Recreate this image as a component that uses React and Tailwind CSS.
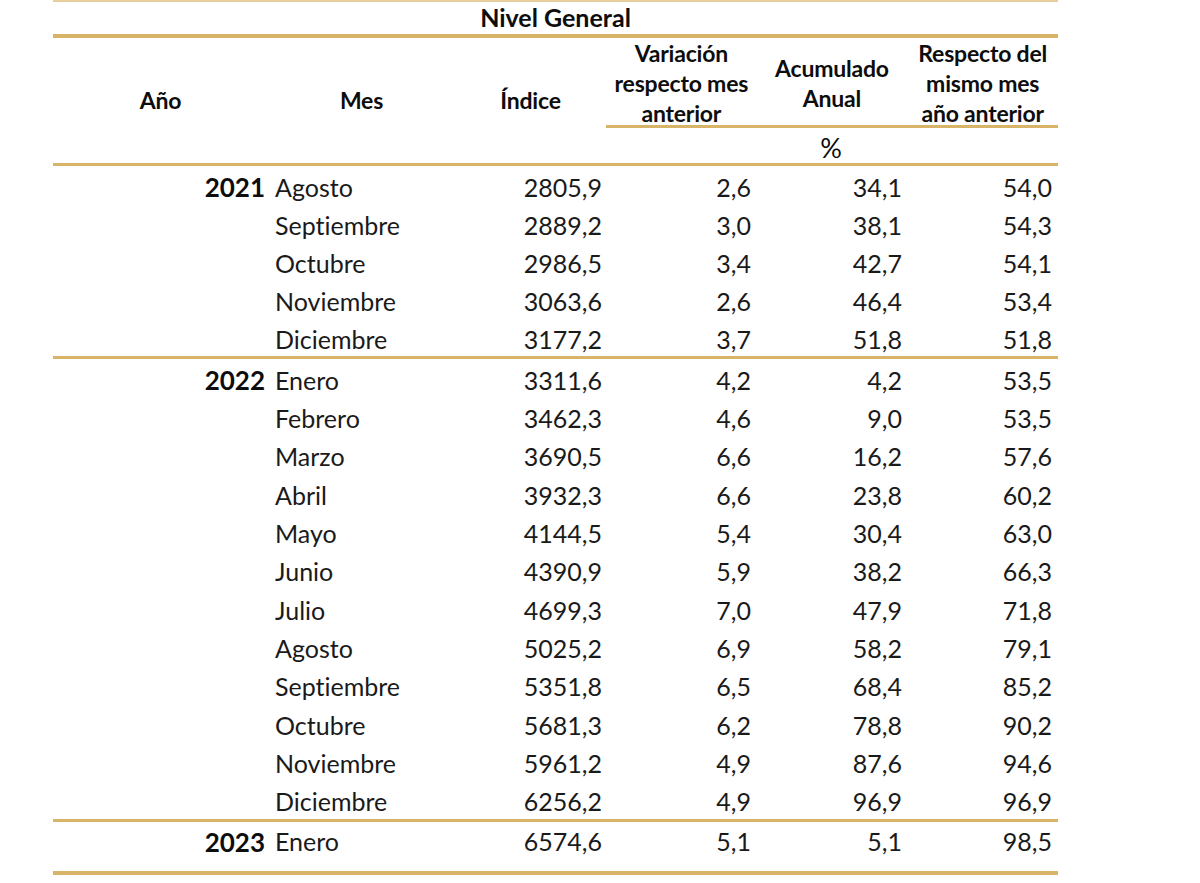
const rows2021 = [
  ["Agosto", "2805,9", "2,6", "34,1", "54,0"],
  ["Septiembre", "2889,2", "3,0", "38,1", "54,3"],
  ["Octubre", "2986,5", "3,4", "42,7", "54,1"],
  ["Noviembre", "3063,6", "2,6", "46,4", "53,4"],
  ["Diciembre", "3177,2", "3,7", "51,8", "51,8"],
];

const rows2022 = [
  ["Enero", "3311,6", "4,2", "4,2", "53,5"],
  ["Febrero", "3462,3", "4,6", "9,0", "53,5"],
  ["Marzo", "3690,5", "6,6", "16,2", "57,6"],
  ["Abril", "3932,3", "6,6", "23,8", "60,2"],
  ["Mayo", "4144,5", "5,4", "30,4", "63,0"],
  ["Junio", "4390,9", "5,9", "38,2", "66,3"],
  ["Julio", "4699,3", "7,0", "47,9", "71,8"],
  ["Agosto", "5025,2", "6,9", "58,2", "79,1"],
  ["Septiembre", "5351,8", "6,5", "68,4", "85,2"],
  ["Octubre", "5681,3", "6,2", "78,8", "90,2"],
  ["Noviembre", "5961,2", "4,9", "87,6", "94,6"],
  ["Diciembre", "6256,2", "4,9", "96,9", "96,9"],
];

const rows2023 = [["Enero", "6574,6", "5,1", "5,1", "98,5"]];

const cols = "grid grid-cols-[215px_187px_151px_150px_150px_152px]";

function Rule() {
  return <div className="h-[3px] bg-[#d7b468]" />;
}

function Group({ year, rows, h }) {
  return (
    <div>
      {rows.map((r, i) => (
        <div key={i} className={`${cols} ${h} items-center`}>
          <div className="text-right pr-[3px] font-bold text-[26px] text-[#0d0d0d]">{i === 0 ? year : ""}</div>
          <div className="pl-[7px]">{r[0]}</div>
          <div className="text-right pr-[4px]">{r[1]}</div>
          <div className="text-right pr-[5px]">{r[2]}</div>
          <div className="text-right pr-[4px]">{r[3]}</div>
          <div className="text-right pr-[6px]">{r[4]}</div>
        </div>
      ))}
    </div>
  );
}

export default function App() {
  return (
    <div
      className="w-[1200px] h-[883px] bg-white overflow-hidden text-[#1a1a1a] text-[25px] leading-none [font-variant-ligatures:none]"
      style={{ fontFamily: "Lato, 'Liberation Sans', sans-serif" }}
    >
      <div className="ml-[53px] w-[1005px]">
        <div className="h-[2px] bg-[#e6cf9c]" />
        <div className="h-[32px] pb-[2px] flex items-center justify-center font-bold text-[25px] text-[#0d0d0d]">
          Nivel General
        </div>
        <div className="h-[4px] bg-[#d7b468]" />
        {/* header */}
        <div className={`${cols} grid-rows-[90px_35px] font-bold text-[23px] text-[#0d0d0d] tracking-[-0.2px]`}>
          <div className="row-span-2 flex items-center justify-center">Año</div>
          <div className="row-span-2 flex items-center justify-center">Mes</div>
          <div className="row-span-2 flex items-center justify-center">Índice</div>
          <div className="col-span-3 border-b-[3px] border-[#d7b468] grid grid-cols-3 leading-[30px] text-center">
            <div>
              Variación
              <br />
              respecto mes
              <br />
              anterior
            </div>
            <div className="flex items-center justify-center">
              Acumulado
              <br />
              Anual
            </div>
            <div>
              Respecto del
              <br />
              mismo mes
              <br />
              año anterior
            </div>
          </div>
          <div />
          <div className="flex items-center justify-center pt-[4px] font-normal text-[27px]">%</div>
          <div />
        </div>
        <Rule />
        <Group year="2021" rows={rows2021} h="h-[38px] pt-[4px]" />
        <Rule />
        <Group year="2022" rows={rows2022} h="h-[38.33px] pt-[4px]" />
        <Rule />
        <Group year="2023" rows={rows2023} h="h-[38px] pt-[2px]" />
        <div className="h-[11px]" />
        <div className="h-[4px] bg-[#d7b468]" />
      </div>
    </div>
  );
}
